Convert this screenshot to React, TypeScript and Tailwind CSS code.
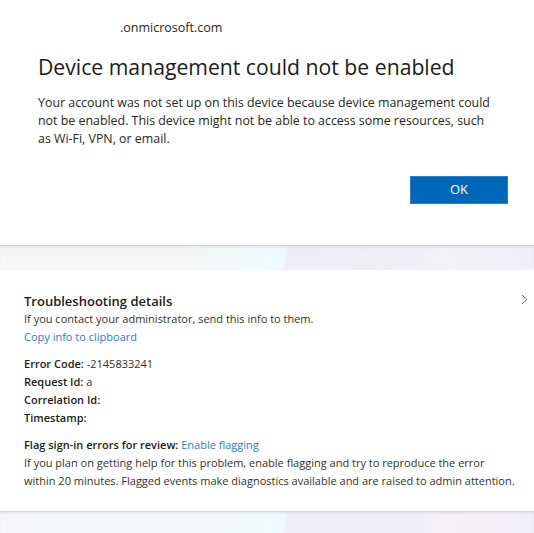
import React from 'react';

const rows: { label: string; value: string }[] = [
  { label: 'Error Code:', value: '-2145833241' },
  { label: 'Request Id:', value: 'a' },
  { label: 'Correlation Id:', value: '' },
  { label: 'Timestamp:', value: '' },
];

const Band: React.FC<{ h: string }> = ({ h }) => (
  <div
    className={`${h} border-t border-[#d4d4d8] shadow-[inset_0_2px_2px_rgba(0,0,0,0.06)] bg-[linear-gradient(100deg,#f6f6f8_0%,#f5f6f7_35%,#f0fafb_45%,#eefbfc_53%,#efedf5_54%,#f0eef6_78%,#f5f2f6_82%,#f1eff6_100%)]`}
  />
);

export default function App() {
  return (
    <div className="w-[534px] h-[533px] overflow-hidden bg-white font-['Open_Sans',sans-serif] text-[#1b1b1b]">
      {/* main dialog */}
      <section className="h-[245px] bg-white pl-[38px] pr-[26px] pt-[19px]">
        <p className="pl-[82px] text-[12.5px] leading-[18px] text-[#262626]">.onmicrosoft.com</p>
        <h1 className="mt-[15px] text-[21.2px] leading-[30px] text-[#1b1b1b]">
          Device management could not be enabled
        </h1>
        <p className="mt-[12px] pr-[8px] text-[12.4px] leading-[18px] text-[#262626]">
          Your account was not set up on this device because device management could not be enabled. This device
          might not be able to access some resources, such as Wi-Fi, VPN, or email.
        </p>
        <div className="mt-[28px] flex justify-end">
          <button className="w-[98px] h-[28px] bg-[#0067b8] border border-[#2a7fd0] text-white text-[13px]">
            OK
          </button>
        </div>
      </section>

      <Band h="h-[25px]" />

      {/* troubleshooting panel */}
      <section className="relative h-[241px] bg-white pl-[24px] pr-[10px] pt-[22px] text-[11px] leading-[18px] text-[#323130]">
        <svg className="absolute right-[6px] top-[24px]" width="7" height="11" viewBox="0 0 7 11">
          <polyline points="1,1 6,5.5 1,10" fill="none" stroke="#666" strokeWidth="1" />
        </svg>
        <h2 className="text-[13px] leading-[18px] font-semibold text-[#1b1b1b]">Troubleshooting details</h2>
        <p>If you contact your administrator, send this info to them.</p>
        <a className="text-[#2b7cd3]">Copy info to clipboard</a>
        <div className="mt-[9px]">
          {rows.map(r => (
            <p key={r.label}>
              <span className="font-semibold text-[#1b1b1b]">{r.label}</span>
              {r.value && <span> {r.value}</span>}
            </p>
          ))}
        </div>
        <p className="mt-[9px]">
          <span className="font-semibold text-[#1b1b1b]">Flag sign-in errors for review:</span>{' '}
          <a className="text-[#2b7cd3]">Enable flagging</a>
        </p>
        <p>
          If you plan on getting help for this problem, enable flagging and try to reproduce the error
          <br />
          within 20 minutes. Flagged events make diagnostics available and are raised to admin attention.
        </p>
      </section>

      <Band h="h-[22px]" />
    </div>
  );
}
